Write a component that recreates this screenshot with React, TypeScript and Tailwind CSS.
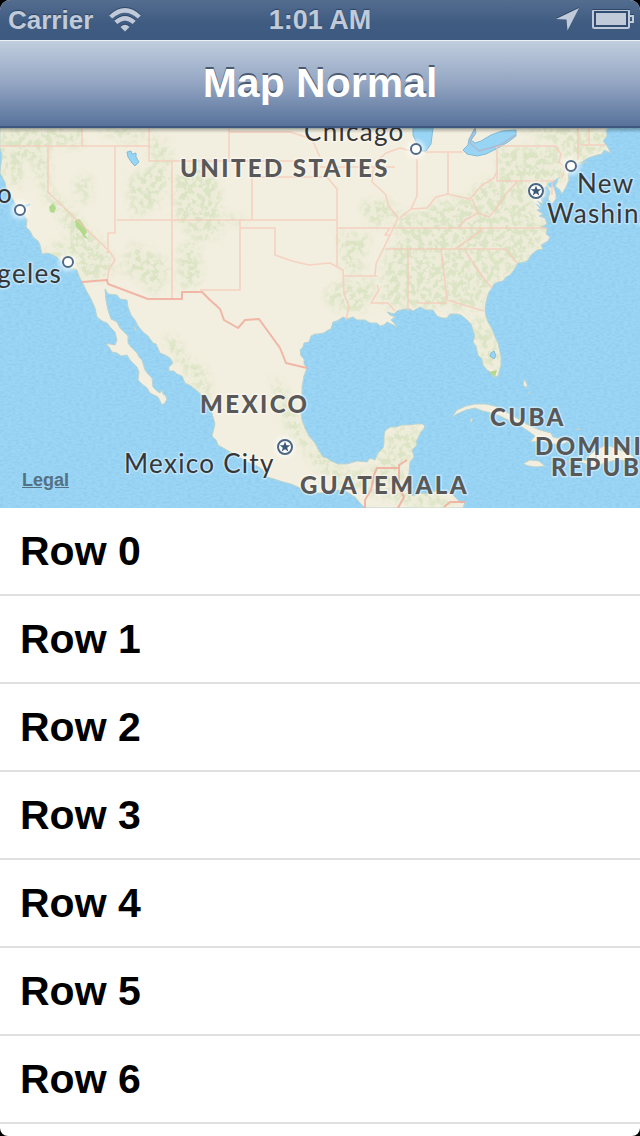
type Label = { text: string; x: number; y: number };

const countries: Label[] = [
  { text: "UNITED STATES", x: 180, y: 177 },
  { text: "MEXICO", x: 200, y: 413 },
  { text: "GUATEMALA", x: 300, y: 494 },
  { text: "CUBA", x: 490, y: 426 },
  { text: "DOMINICAN", x: 535, y: 455 },
  { text: "REPUBLIC", x: 551, y: 476 },
];

const cities: Label[] = [
  { text: "Chicago", x: 304, y: 141 },
  { text: "New York", x: 577, y: 193 },
  { text: "Washington", x: 547, y: 223 },
  { text: "Mexico City", x: 124, y: 473 },
];

const westCities: Label[] = [
  { text: "San Francisco", x: 13, y: 203 },
  { text: "Los Angeles", x: 62, y: 283 },
];

const dots = [
  [20, 210],
  [68, 262],
  [416, 149],
  [571, 166],
];

const capitals = [
  [536, 191],
  [285, 447],
];

const mainland =
  "M0 128V148L2 155 1 164 0 173 5 182 6 188 9 194 12 198 17 207 22 212 27 220 26 227 30 231 33 237 38 241 40 245 42 254 48 253 53 255 57 257 60 260 68 267 74 269 77 270 79 276 82 282 87 292 91 299 95 308 97 317 102 321 107 323 111 328 115 332 117 340 115 345 110 344 106 344 109 347 112 352 117 353 121 356 127 355 130 360 137 367 139 372 138 380 142 384 147 388 150 393 158 397 162 405 165 403 167 399 165 395 163 394 162 390 160 393 157 391 153 387 152 378 148 374 145 370 142 360 139 357 137 353 131 347 128 343 128 336 125 333 120 328 117 322 111 319 108 310 106 300 105 289 108 294 117 295 120 299 127 300 128 307 131 315 135 320 138 326 143 332 148 336 153 343 156 344 160 353 165 355 170 358 173 363 169 367 169 371 174 371 177 374 182 376 185 383 191 386 197 391 203 396 207 403 211 410 213 417 215 424 212 436 216 440 218 445 230 452 239 457 247 462 257 466 263 470 267 477 274 479 283 482 291 484 298 487 305 491 313 493 320 493 330 492 338 490 347 492 355 497 360 503 365 508H463L465 502 461 503 455 497 451 492 445 493 435 491 428 494 420 493 413 496 407 490 408 480 409 473 410 462 414 457 412 450 417 445 416 441 418 438 421 432 425 427 423 424 416 424 410 425 402 425 396 427 390 427 385 431 384 436 384 444 383 448 378 453 375 460 370 458 367 462 357 461 347 464 338 464 331 461 327 458 323 457 318 449 315 443 309 436 305 428 302 420 301 413 302 400 302 387 304 376 307 368 304 364 304 359 301 356 300 350 303 347 304 343 309 342 311 336 315 334 318 334 324 333 328 330 331 329 333 322 337 321 343 317 347 319 353 317 357 320 365 320 370 323 377 323 380 326 384 325 387 322 391 324 397 327 394 323 391 320 395 317 390 315 387 312 394 314 397 311 405 309 410 309 413 311 420 307 426 310 433 310 437 316 442 318 447 318 450 314 457 314 461 315 467 320 471 324 473 330 475 336 473 342 476 346 478 355 482 359 483 365 487 370 490 372 494 377 498 376 501 365 501 358 500 352 498 343 495 337 492 329 488 322 486 316 485 310 486 302 487 298 489 292 492 288 494 284 498 282 503 281 506 277 510 275 514 270 516 266 518 263 525 262 528 260 531 255 537 250 543 249 541 245 548 241 550 237 546 234 547 229 541 227 547 224 545 218 539 216 543 214 537 210 542 209 540 204 537 201 543 204 541 198 545 196 544 188 547 186 550 192 548 199 552 204 556 199 556 194 553 185 558 181 555 186 560 190 562 194 566 187 569 180 568 174 572 169 577 165 588 158 597 155 602 154 604 150 611 153 607 146 603 141 607 136 606 131 608 128Z";

const stateLines =
  "M0 146H149V161H300M82 128V146M48 146V192L110 252 115 260 109 269 107 282M115 146V233H108V253M149 146V128M172 162V299M117 220H337M229 128V161M229 132H290L312 139 320 157M320 167H395M252 177H327L337 189V267M252 177V220M240 220V290H200M240 228H275V255L292 261 309 265 330 263 343 270 344 294 349 306 346 320M337 228H390L385 235H391M343 276H377M375 276L376 264 390 235 398 218 388 205 386 195 380 189 372 182 373 171 378 160 386 153 400 148 412 151M417 159V196L411 209 400 218M411 209L427 208 436 197 448 194 456 196 470 199 481 186 494 178 497 171M448 152V194M425 152H463M497 146H555L561 154 559 162 565 168 562 178M497 146V181H555M385 249H505L509 253 517 263M391 228H547M408 249V311M377 285L379 290 371 303H388L395 311M441 249 447 300 484 311M466 252 475 266 485 280 492 288M417 303H447M472 199 478 213 465 220 458 228M478 213 489 217 496 209 505 195 517 182M455 249 468 240 484 228M578 128V160M578 145H605M589 128V145M552 181V195";

const nationalLine =
  "M82 282 107 280 108 284 148 299H182V292H202L210 300 220 309 224 320 238 328 245 320 259 319 280 348 286 363 307 368M365 508V500L371 490 374 475 377 468H399V465L407 460M399 468V488L404 497 398 508M444 507 450 502 465 502";

const woodland = [
  "M0 128H82V146L48 146 50 190 75 215 110 254 112 276 85 280 66 262 42 251 60 243 72 245 58 210 46 199 32 160 25 158 20 188 5 178 0 160Z",
  "M75 181 92 177 88 205 78 199ZM92 128H146L135 144ZM128 180 170 154 168 180 157 206 132 217ZM149 136 165 141 174 160 149 156ZM120 270 132 243 158 256 170 267 157 295 137 277Z",
  "M174 177 205 160 218 180 217 223 230 215 249 221 211 226 205 245 177 224ZM178 250 195 240 203 280 179 290ZM213 182 220 190 219 240 210 230Z",
  "M362 202 390 201 394 220 376 227 365 219ZM338 233 370 235 366 252 357 262 370 270 344 272ZM347 280 375 280 370 300 360 313 331 307 325 291Z",
  "M394 209 412 215 423 212 430 205 443 202 466 198 483 180 498 182 536 179 532 210 546 229 538 249 513 270 490 285 480 310 410 307 380 305 385 260 400 230Z",
  "M498 148 555 146 560 160 569 179 552 181 540 189 499 179ZM562 145 578 145 600 150 571 168ZM515 128H607V150L562 155 556 142Z",
  "M472 318 487 320 499 347 500 370 483 363 474 339ZM393 428 423 426 413 455 401 464 410 482 380 475 375 460ZM332 472 376 470 410 488 440 494 457 507H420L374 494ZM164 335 179 340 184 358 203 367 212 395 205 399 187 373 168 351ZM270 374 287 393 300 427 313 447 350 475 400 490 350 489 317 468 288 430Z",
];

function UnitedStatesMap() {
  return (
    <svg
      role="img"
      aria-label="Map of Mexico and the United States"
      viewBox="0 128 640 380"
      preserveAspectRatio="xMidYMid slice"
      className="block size-full"
    >
      <defs>
        <filter id="ripples" x="0" y="0" width="100%" height="100%" colorInterpolationFilters="sRGB">
          <feTurbulence type="fractalNoise" baseFrequency="0.25 0.5" numOctaves="3" seed="4" />
          <feColorMatrix values="0 0 0 0 .42  0 0 0 0 .66  0 0 0 0 .86  2.4 0 0 0 -.9" />
        </filter>
        <filter id="speckle" x="0" y="0" width="100%" height="100%" colorInterpolationFilters="sRGB">
          <feTurbulence type="fractalNoise" baseFrequency="0.17" numOctaves="5" seed="9" />
          <feColorMatrix values="0 0 0 0 .79  0 0 0 0 .86  0 0 0 0 .69  8 0 0 0 -3.7" />
        </filter>
        <filter id="soft">
          <feGaussianBlur stdDeviation="4" />
        </filter>
        <filter id="halo" x="-50%" y="-50%" width="200%" height="200%">
          <feGaussianBlur stdDeviation="2" />
        </filter>
        <linearGradient id="bar-shade" x1="0" y1="0" x2="0" y2="1">
          <stop offset="0" stopColor="#000" stopOpacity=".3" />
          <stop offset="1" stopColor="#000" stopOpacity="0" />
        </linearGradient>
        <clipPath id="land">
          <path d={mainland} />
        </clipPath>
        <mask id="woods">
          <g fill="#fff" filter="url(#soft)">
            {woodland.map((d) => (
              <path key={d} d={d} />
            ))}
          </g>
        </mask>
      </defs>

      <rect y="128" width="640" height="380" fill="#9bd6f5" />
      <rect y="128" width="640" height="380" filter="url(#ripples)" opacity=".2" />

      <g fill="#f3efe0" stroke="#b9d3cf" strokeWidth="1">
        <path d={mainland} />
        <path d="M452 417 457 410 466 406 475 404 486 404 495 406 504 411 512 415 520 420 530 426 540 430 551 433 553 437 563 439 568 442 563 444 551 444 542 441 530 442 535 436 528 431 519 425 508 420 500 416 491 413 483 411 475 408 466 410 457 414ZM470 419H473L471 423ZM523 464 530 460 539 461 545 466 536 467 529 466ZM566 462 577 459 591 461 588 456 597 449 607 445 615 448 630 454 634 457 632 461 616 460 602 464 593 467 581 462ZM524 379 527 384 527 388 523 385ZM528 392H530L529 394ZM576 429H581L577 430Z" />
        <path d="M569 167 577 163 587 162 577 165ZM134 326 136 328 135 331Z" />
      </g>

      <g clipPath="url(#land)">
        <g fill="#e2e8cc" opacity=".4" filter="url(#soft)">
          {woodland.map((d) => (
            <path key={d} d={d} />
          ))}
        </g>
        <g mask="url(#woods)">
          <rect y="128" width="640" height="380" filter="url(#speckle)" opacity=".5" />
        </g>
      </g>

      <path d="M49 207 53 203 56 208 54 213 50 212ZM75 220 79 219 84 225 87 232 85 235 89 240 84 237 80 231 76 227Z" fill="#b2da8c" />
      <path d="M489 372 497 370 495 377Z" fill="#b5d98b" />
      <g fill="#98d4f3" stroke="#82bcd7" strokeWidth="1">
        <path d="M127 152 131 151 132 154 136 153 136 157 139 162 135 166 132 163 128 157Z" />
        <path d="M413 128V135L417 144 420 151 426 151 431 144 433 128Z" />
        <path d="M475 128 469 139 468 145 463 150 467 154 477 156 486 154 498 148 508 142 516 136 516 130 502 131 491 135 481 141 475 143 471 140 476 133Z" />
        <path d="M491 353 494 351 496 356 494 359 490 356Z" />
        <path d="M24 205 31 204 27 207ZM547 184 553 181 560 177 555 184 550 188ZM535 203 543 208 541 210Z" strokeWidth="0" />
      </g>

      <g fill="none" strokeLinejoin="round">
        <path d={stateLines} stroke="#f6c9b8" strokeOpacity=".78" strokeWidth="1.6" />
        <path d={nationalLine} stroke="#f0ac9b" strokeOpacity=".85" strokeWidth="2" />
        <path d="M475 128 470 143 479 151 500 145 515 135M596 446V462" stroke="#b9a8bd" strokeOpacity=".6" strokeWidth="1.5" />
      </g>

      {dots.map(([x, y]) => (
        <g key={`${x}-${y}`} transform={`translate(${x} ${y})`}>
          <circle r="9" fill="#fff" opacity=".65" filter="url(#halo)" />
          <circle r="5" fill="#fff" stroke="#526b87" strokeWidth="2" />
        </g>
      ))}
      {capitals.map(([x, y]) => (
        <g key={`${x}-${y}`} transform={`translate(${x} ${y})`}>
          <circle r="10" fill="#fff" opacity=".7" filter="url(#halo)" />
          <circle r="7" fill="#fff" stroke="#4b6685" strokeWidth="2" />
          <path d="M0-5.5 1.4-1.8 5.3-1.7 2.2 .8 3.3 4.5 0 2.3-3.3 4.5-2.2 .8-5.3-1.7-1.4-1.8Z" fill="#3d5877" />
        </g>
      ))}

      <g
        fill="#585858"
        stroke="#fff"
        strokeOpacity=".45"
        strokeWidth="3"
        strokeLinejoin="round"
        paintOrder="stroke"
        className="font-['Lato',sans-serif] text-[24px] font-black tracking-widest"
      >
        {countries.map((c) => (
          <text key={c.text} x={c.x} y={c.y}>
            {c.text}
          </text>
        ))}
      </g>
      <g
        fill="#343638"
        stroke="#fff"
        strokeOpacity=".4"
        strokeWidth="3"
        strokeLinejoin="round"
        paintOrder="stroke"
        className="font-['Lato',sans-serif] text-[26px] tracking-wider"
      >
        {cities.map((c) => (
          <text key={c.text} x={c.x} y={c.y}>
            {c.text}
          </text>
        ))}
        {westCities.map((c) => (
          <text key={c.text} x={c.x} y={c.y} textAnchor="end">
            {c.text}
          </text>
        ))}
      </g>
      <rect y="128" width="640" height="5" fill="url(#bar-shade)" />
    </svg>
  );
}

function WifiIcon() {
  return (
    <svg aria-hidden="true" viewBox="0 0 32 24" className="h-6 w-8 drop-shadow-[0_-1px_0_#2e4766]">
      <g fill="none" stroke="#c0cad8" strokeWidth="4.4">
        <path d="M1.7 9Q16-4.3 30.3 9" />
        <path d="M6.8 14.4Q16 6 25.2 14.4" />
      </g>
      <path d="M11.5 19Q16 14.5 20.5 19L16 23.5Z" fill="#c0cad8" />
    </svg>
  );
}

function StatusBar() {
  return (
    <header className="grid h-10 shrink-0 grid-cols-3 items-center bg-linear-to-b from-[#536d8f] via-[#3f5b81] via-60% to-[#3d5a80] px-2 font-bold text-[#c0cad8] [text-shadow:0_-1px_1px_#2c4463]">
      <div className="flex items-center gap-4">
        <span className="text-[26px] leading-10">Carrier</span>
        <WifiIcon />
      </div>
      <time className="text-center text-[27px] leading-10">1:01 AM</time>
      <div className="-mr-0.5 flex items-center justify-end gap-3">
        <svg aria-hidden="true" viewBox="0 0 24 24" className="size-6 drop-shadow-[0_-1px_0_#2e4766]">
          <path d="M23 0 11.5 22.5 10.5 11.5 0 11Z" fill="#c0cad8" />
        </svg>
        <svg aria-hidden="true" viewBox="0 0 42 20" className="h-5 w-[42px] drop-shadow-[0_-1px_0_#2e4766]">
          <rect x="1" y="0" width="36" height="18" rx="1.5" fill="#314d73" stroke="#c0cad8" strokeWidth="2" />
          <rect x="4" y="3" width="30" height="12" fill="#c0cad8" />
          <path d="M38 6H41V12H38" fill="none" stroke="#c0cad8" strokeWidth="2" />
        </svg>
      </div>
    </header>
  );
}

const rows = ["Row 0", "Row 1", "Row 2", "Row 3", "Row 4", "Row 5", "Row 6"];

export default function App() {
  return (
    <div className="min-h-screen bg-black font-['Liberation_Sans',Arial,sans-serif]">
      <div className="flex min-h-screen flex-col overflow-hidden rounded-t-[10px] rounded-b-[8px] bg-white">
        <StatusBar />
        <div className="flex h-[88px] shrink-0 items-center justify-center border-t border-b-2 border-t-[#eef2f6] border-b-[#3d587f] bg-linear-to-b from-[#c1cede] via-[#93a5c2] via-50% to-[#57729b] pb-0.5">
          <h1 className="text-[41px] leading-[48px] font-bold text-white [text-shadow:0_-2px_0_#4d5b70]">
            Map Normal
          </h1>
        </div>
        <main className="flex grow flex-col">
          <section className="relative h-[380px] shrink-0">
            <UnitedStatesMap />
            <a
              href="#legal"
              className="absolute bottom-4 left-[22px] text-[18px] leading-6 font-bold text-[#547083] underline"
            >
              Legal
            </a>
          </section>
          <ul>
            {rows.map((row) => (
              <li
                key={row}
                className="flex h-[88px] items-center border-b-2 border-[#e0e0e0] px-5 text-[41px] leading-[48px] font-bold text-black"
              >
                {row}
              </li>
            ))}
          </ul>
        </main>
      </div>
    </div>
  );
}
